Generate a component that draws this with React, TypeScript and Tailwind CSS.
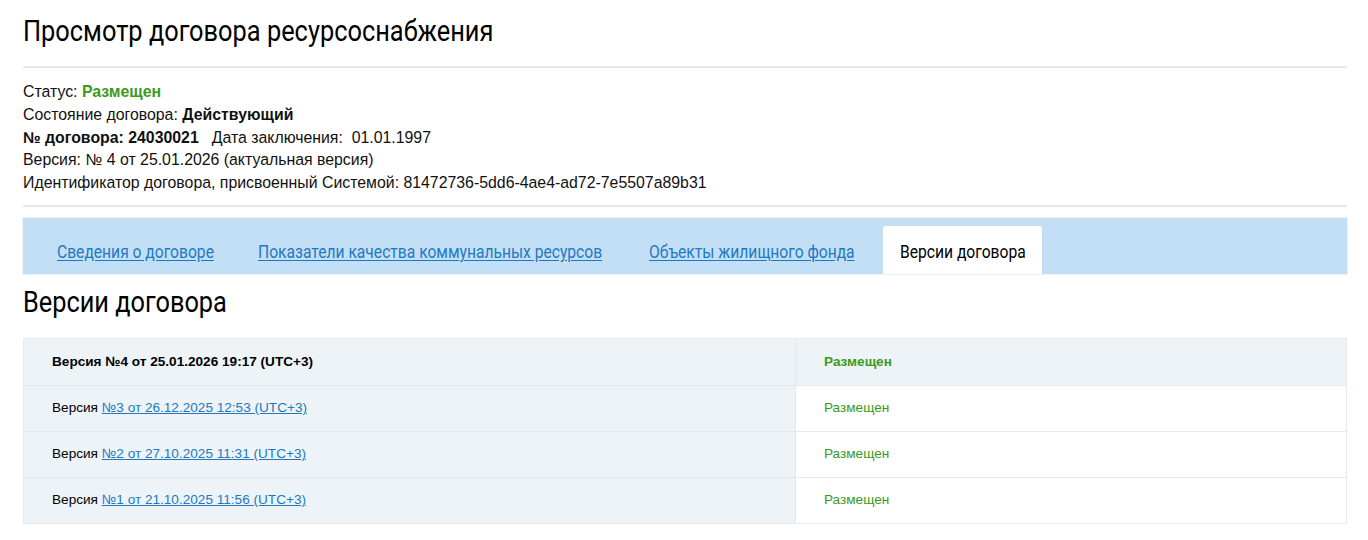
const narrow = "font-['Roboto',sans-serif]";
const body = "font-['Liberation_Sans','Arial',sans-serif]";

const tabs = [
  { label: 'Сведения о договоре', w: 'w-[156px]', active: false },
  { label: 'Показатели качества коммунальных ресурсов', w: 'w-[346px]', active: false },
  { label: 'Объекты жилищного фонда', w: 'w-[206px]', active: false },
  { label: 'Версии договора', w: 'w-[125px]', active: true },
];

const versions = [
  { num: '№3 от 26.12.2025 12:53 (UTC+3)' },
  { num: '№2 от 27.10.2025 11:31 (UTC+3)' },
  { num: '№1 от 21.10.2025 11:56 (UTC+3)' },
];

// condensed look: the page font is a narrow face, squeeze Roboto to match
function Narrow({ children, link }: { children: React.ReactNode; link?: boolean }) {
  return (
    <span
      className={`inline-block whitespace-nowrap origin-left scale-x-[0.868] ${
        link ? 'underline underline-offset-[2px]' : ''
      }`}
    >
      {children}
    </span>
  );
}

export default function App() {
  return (
    <div className={`bg-white min-h-[540px] pl-[23px] pr-[21px] pt-[14px] text-[#111] ${body}`}>
      <h1 className={`text-[30px] leading-[34px] text-black ${narrow}`}>
        <span className="inline-block whitespace-nowrap origin-left scale-x-[0.846]">
          Просмотр договора ресурсоснабжения
        </span>
      </h1>

      <div className="mt-[18px] h-[2px] bg-[#e8e8e8]" />

      <div className="pt-[13px] pb-[10px] text-[15.85px] leading-[22.75px]">
        <div>
          Статус: <span className="font-bold text-[#3b9a1c]">Размещен</span>
        </div>
        <div>
          Состояние договора: <span className="font-bold">Действующий</span>
        </div>
        <div>
          <span className="font-bold">№ договора: 24030021</span>
          <span className="ml-[13px]">Дата заключения:&nbsp; 01.01.1997</span>
        </div>
        <div>Версия: № 4 от 25.01.2026 (актуальная версия)</div>
        <div>Идентификатор договора, присвоенный Системой: 81472736-5dd6-4ae4-ad72-7e5507a89b31</div>
      </div>

      <div className="h-[2px] bg-[#e8e8e8]" />

      <div className="mt-[11px] h-[56px] bg-[#c3dff6] flex items-end pl-[17px] gap-[11px] shadow-[0_0_0_1px_#eef2f5]">
        {tabs.map((t) =>
          t.active ? (
            <div
              key={t.label}
              className={`h-[48px] bg-white rounded-t-[3px] px-[17px] pt-[4px] flex items-center text-[18px] text-black ${narrow}`}
            >
              <div className={t.w}>
                <Narrow>{t.label}</Narrow>
              </div>
            </div>
          ) : (
            <div key={t.label} className={`h-[48px] px-[17px] pt-[4px] flex items-center text-[18px] ${narrow}`}>
              <a className={`${t.w} text-[#1d7ac2]`}>
                <Narrow link>{t.label}</Narrow>
              </a>
            </div>
          )
        )}
      </div>

      <h2 className={`mt-[11px] text-[30px] leading-[34px] text-black ${narrow}`}>
        <span className="inline-block whitespace-nowrap origin-left scale-x-[0.845]">Версии договора</span>
      </h2>

      <div className="mt-[19px] border border-[#e6eaee] text-[13.6px]">
        <div className="grid grid-cols-[771px_1fr] h-[46px] bg-[#eef3f7] font-bold">
          <div className="pl-[28px] flex items-center text-black">Версия №4 от 25.01.2026 19:17 (UTC+3)</div>
          <div className="pl-[28px] flex items-center text-[#3b9a1c] border-l border-[#e3e8ec]">Размещен</div>
        </div>
        {versions.map((v) => (
          <div key={v.num} className="grid grid-cols-[771px_1fr] h-[46px] border-t border-[#e6e9ec]">
            <div className="pl-[28px] flex items-center bg-[#eef3f7] text-black">
              Версия&nbsp;<a className="text-[#1d7ac2] underline">{v.num}</a>
            </div>
            <div className="pl-[28px] flex items-center bg-white text-[#3b9a1c] border-l border-[#e3e8ec]">
              Размещен
            </div>
          </div>
        ))}
      </div>
    </div>
  );
}
